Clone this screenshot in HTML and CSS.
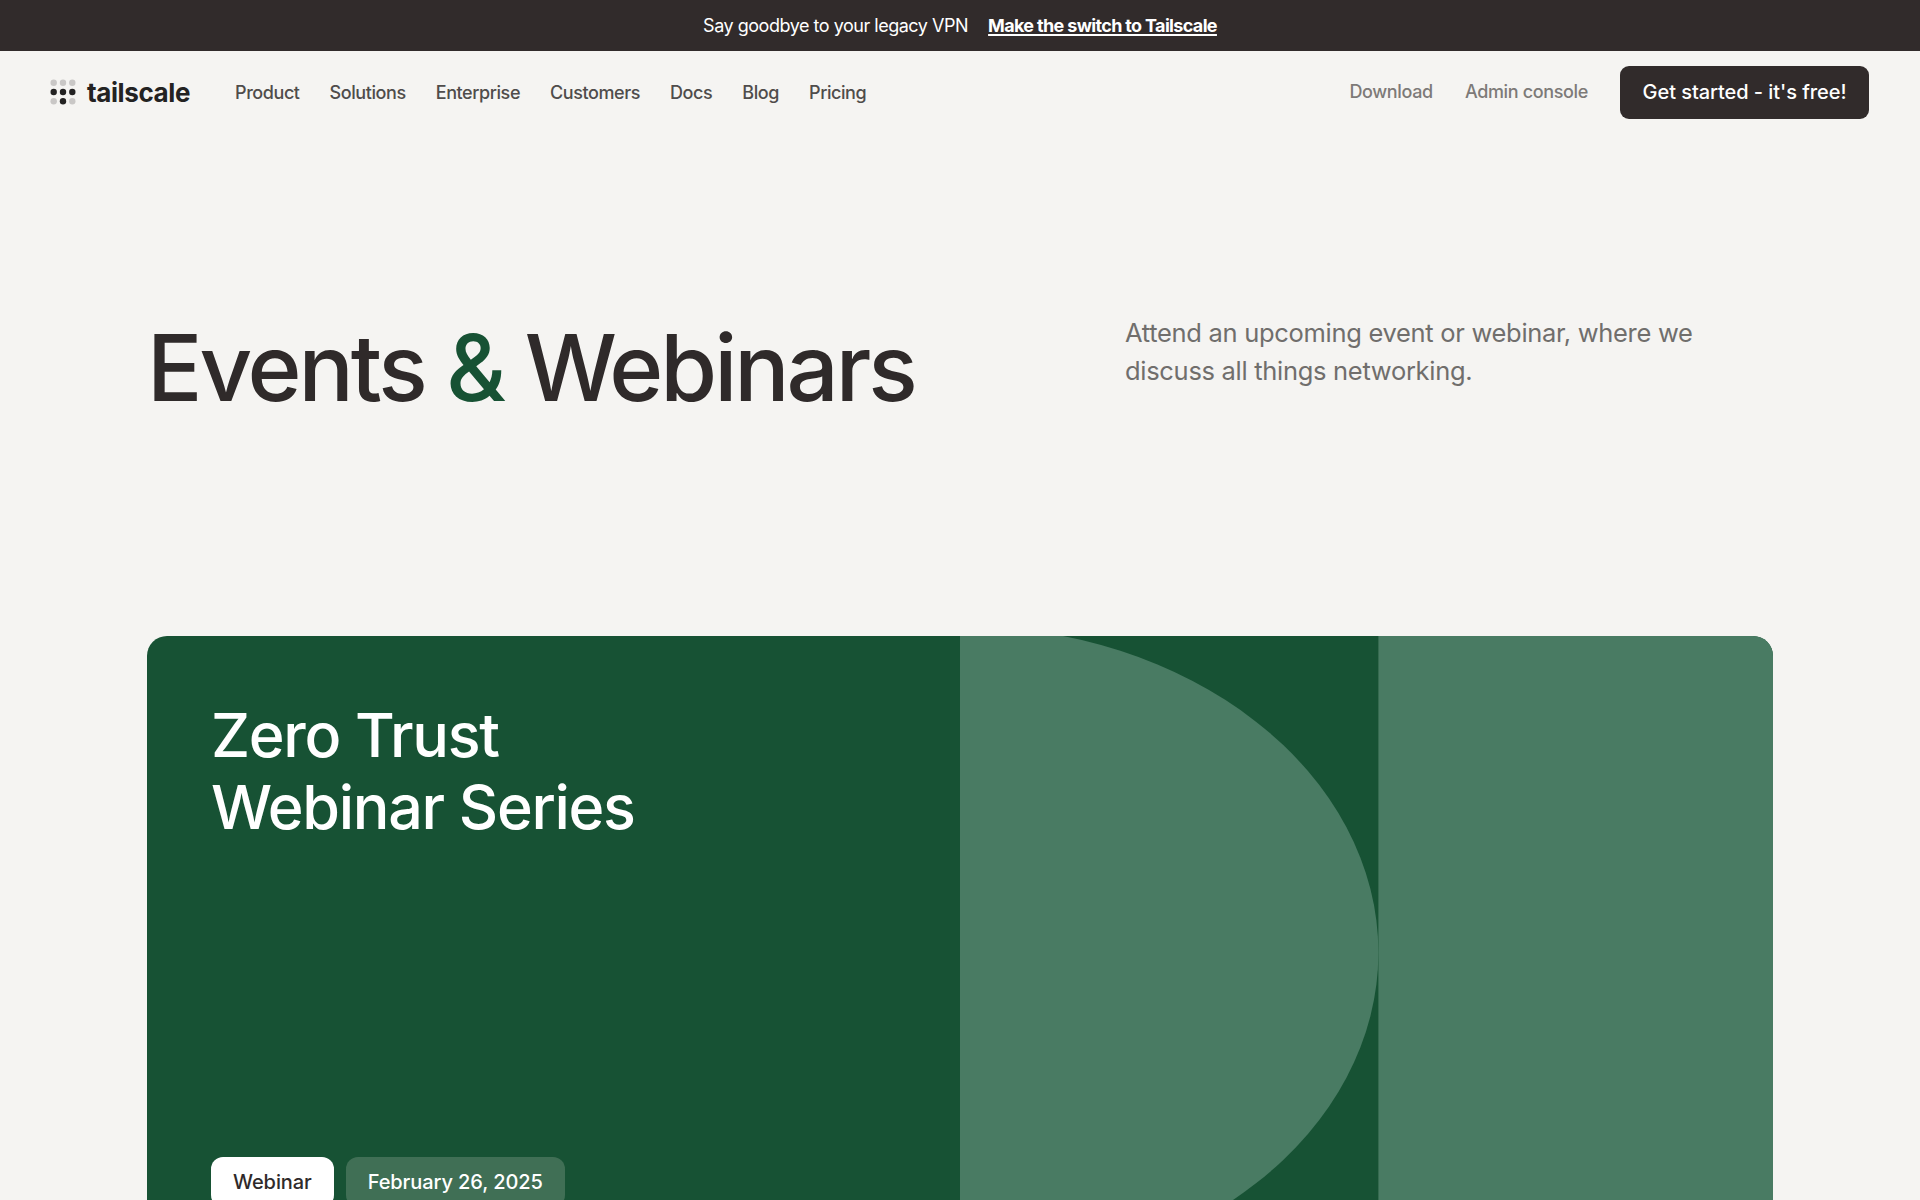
FILE: index.html
```html
<!DOCTYPE html>
<html lang="en">
<head>
    <meta charset="UTF-8">
    <meta name="viewport" content="width=device-width, initial-scale=1.0">
    <title>Events &amp; Webinars</title>
    <link rel="stylesheet" href="styles.css">
</head>
<body>
    <div class="banner">
        <span class="banner-text">Say goodbye to your legacy VPN</span>
        <a class="banner-link" href="#">Make the switch to Tailscale</a>
    </div>

    <header class="header">
        <a class="logo" href="#">
            <svg class="logo-dots" width="26" height="26" viewBox="0 0 26 26">
                <g fill="#c9c7c6">
                    <circle cx="3.7" cy="3.7" r="3.2"/>
                    <circle cx="13" cy="3.7" r="3.2"/>
                    <circle cx="22.3" cy="3.7" r="3.2"/>
                    <circle cx="3.7" cy="22.3" r="3.2"/>
                    <circle cx="22.3" cy="22.3" r="3.2"/>
                </g>
                <g fill="#232222">
                    <circle cx="3.7" cy="13" r="3.2"/>
                    <circle cx="13" cy="13" r="3.2"/>
                    <circle cx="22.3" cy="13" r="3.2"/>
                    <circle cx="13" cy="22.3" r="3.2"/>
                </g>
            </svg>
            <span class="logo-name">tailscale</span>
        </a>
        <nav class="nav">
            <a href="#">Product</a>
            <a href="#">Solutions</a>
            <a href="#">Enterprise</a>
            <a href="#">Customers</a>
            <a href="#">Docs</a>
            <a href="#">Blog</a>
            <a href="#">Pricing</a>
        </nav>
        <div class="actions">
            <a class="action-link" href="#">Download</a>
            <a class="action-link" href="#">Admin console</a>
            <a class="start-btn" href="#">Get started - it's free!</a>
        </div>
    </header>

    <main class="content">
        <section class="intro">
            <h1 class="title">Events <span class="amp">&amp;</span> Webinars</h1>
            <p class="subtitle">Attend an upcoming event or webinar, where we discuss all things networking.</p>
        </section>

        <section class="card">
            <div class="card-body">
                <h2 class="card-title">Zero Trust<br>Webinar Series</h2>
                <div class="tags">
                    <span class="tag tag-light">Webinar</span>
                    <span class="tag tag-dark">February 26, 2025</span>
                </div>
            </div>
            <svg class="card-art" viewBox="0 0 813 564" preserveAspectRatio="none">
                <ellipse cx="0.4" cy="316.5" rx="418" ry="326.5"/>
                <rect x="418.4" y="0" width="395" height="564"/>
            </svg>
        </section>
    </main>
</body>
</html>
```
FILE: styles.css
```css
* {
    box-sizing: border-box;
}
body {
    font-family: 'Inter', sans-serif;
    background: #f5f4f2;
    color: #2f2a2a;
    height: 1200px;
    margin: 0;
    overflow: hidden;
}
a {
    color: inherit;
    text-decoration: none;
}
.banner {
    display: flex;
    justify-content: center;
    align-items: center;
    gap: 20px;
    height: 51px;
    background: #312b2b;
    color: #fff;
    font-size: 18px;
    letter-spacing: -0.48px;
}
.banner-link {
    font-weight: 700;
    letter-spacing: -0.66px;
    text-decoration: underline;
    text-decoration-thickness: 2px;
    text-underline-offset: 2px;
}
.header {
    display: flex;
    align-items: center;
    height: 83px;
    padding: 0 51px 0 50px;
}
.logo {
    display: flex;
    align-items: center;
    width: 185px;
    gap: 11px;
}
.logo-dots {
    margin-bottom: 1px;
}
.logo-name {
    color: #232222;
    font-size: 26px;
    font-weight: 700;
    letter-spacing: -0.4px;
}
.nav {
    display: flex;
    gap: 30px;
    color: #4f4c4b;
    font-size: 18px;
    font-weight: 500;
    letter-spacing: -0.42px;
}
.actions {
    display: flex;
    align-items: center;
    gap: 32px;
    margin-left: auto;
}
.action-link {
    padding-bottom: 2px;
    color: #7d7a78;
    font-size: 18px;
    font-weight: 500;
    letter-spacing: -0.35px;
}
.start-btn {
    display: flex;
    justify-content: center;
    align-items: center;
    width: 249px;
    height: 53px;
    padding-bottom: 1px;
    border-radius: 9px;
    background: #312b2b;
    color: #fff;
    font-size: 20px;
    font-weight: 500;
    letter-spacing: -0.06px;
}
.content {
    width: 1626px;
    margin: 0 auto;
}
.intro {
    display: flex;
    height: 502px;
    padding-top: 179px;
}
.title {
    width: 978px;
    margin: 0;
    font-size: 92px;
    font-weight: 500;
    line-height: 110px;
    letter-spacing: -3.05px;
}
.amp {
    color: #175234;
}
.subtitle {
    width: 600px;
    margin: 1px 0 0;
    color: #706e6c;
    font-size: 25.5px;
    line-height: 38px;
    letter-spacing: -0.3px;
}
.card {
    display: flex;
    height: 564px;
    border-radius: 20px 20px 0 0;
    background: #175234;
    overflow: hidden;
}
.card-body {
    display: flex;
    flex-direction: column;
    justify-content: space-between;
    width: 813px;
    padding: 63px 64px 0;
}
.card-title {
    margin: 0;
    color: #fff;
    font-size: 61px;
    font-weight: 500;
    line-height: 72px;
    letter-spacing: -1.3px;
}
.card-art {
    width: 813px;
    height: 564px;
    fill: #497b63;
}
.tags {
    display: flex;
    gap: 12px;
    height: 43px;
}
.tag {
    display: flex;
    flex-shrink: 0;
    align-items: center;
    height: 50px;
    padding: 0 22px;
    border-radius: 12px;
    font-size: 20px;
    font-weight: 500;
    letter-spacing: -0.09px;
}
.tag-light {
    background: #fff;
    color: #2f2a2a;
}
.tag-dark {
    background: #406f55;
    color: #fff;
}
```
